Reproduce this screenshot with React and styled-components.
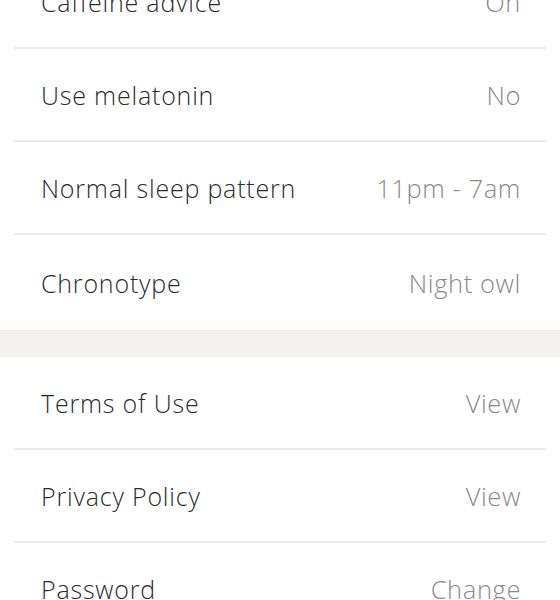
import React from 'react'
import styled, { createGlobalStyle } from 'styled-components'

const GlobalStyle = createGlobalStyle`
  html, body {
    margin: 0;
    padding: 0;
    background: #ffffff;
    overflow: hidden;
  }
  body {
    font-family: "Open Sans", "Noto Sans", "Liberation Sans", sans-serif;
    -webkit-font-smoothing: antialiased;
  }
`

const Screen = styled.div`
  width: 560px;
  height: 600px;
  overflow: hidden;
  background: #ffffff;
`

const Section = styled.div`
  display: flex;
  flex-direction: column;
  margin-top: ${(props) => props.offset || 0}px;
`

const Row = styled.div`
  display: flex;
  align-items: center;
  justify-content: space-between;
  height: 92px;
  padding: 0 40px 0 41px;
  position: relative;

  &:not(:last-child)::after {
    content: '';
    position: absolute;
    left: 14px;
    right: 14px;
    bottom: -1px;
    height: 2px;
    background: #ebebeb;
  }

  & + & {
    margin-top: 1px;
  }

  &:last-child {
    height: ${(props) => (props.tall ? 95 : 92)}px;
  }
`

const Label = styled.span`
  color: #2c2c2c;
  font-size: 25px;
  font-weight: 300;
  letter-spacing: 0.8px;
`

const Value = styled.span`
  color: #8a8a8a;
  font-size: 25.5px;
  font-weight: 300;
  letter-spacing: 0.6px;
  margin-right: -1px;
`

const Spacer = styled.div`
  height: 27px;
  background: #f4f0ed;
`

const preferences = [
  { label: 'Caffeine advice', value: 'On' },
  { label: 'Use melatonin', value: 'No' },
  { label: 'Normal sleep pattern', value: '11pm - 7am' },
  { label: 'Chronotype', value: 'Night owl' },
]

const account = [
  { label: 'Terms of Use', value: 'View' },
  { label: 'Privacy Policy', value: 'View' },
  { label: 'Password', value: 'Change' },
]

const SettingsList = ({ items, offset, tall }) => (
  <Section offset={offset}>
    {items.map((item) => (
      <Row key={item.label} tall={tall}>
        <Label>{item.label}</Label>
        <Value>{item.value}</Value>
      </Row>
    ))}
  </Section>
)

export default function App() {
  return (
    <>
      <GlobalStyle />
      <Screen>
        <SettingsList items={preferences} offset={-44} tall />
        <Spacer />
        <SettingsList items={account} />
      </Screen>
    </>
  )
}
